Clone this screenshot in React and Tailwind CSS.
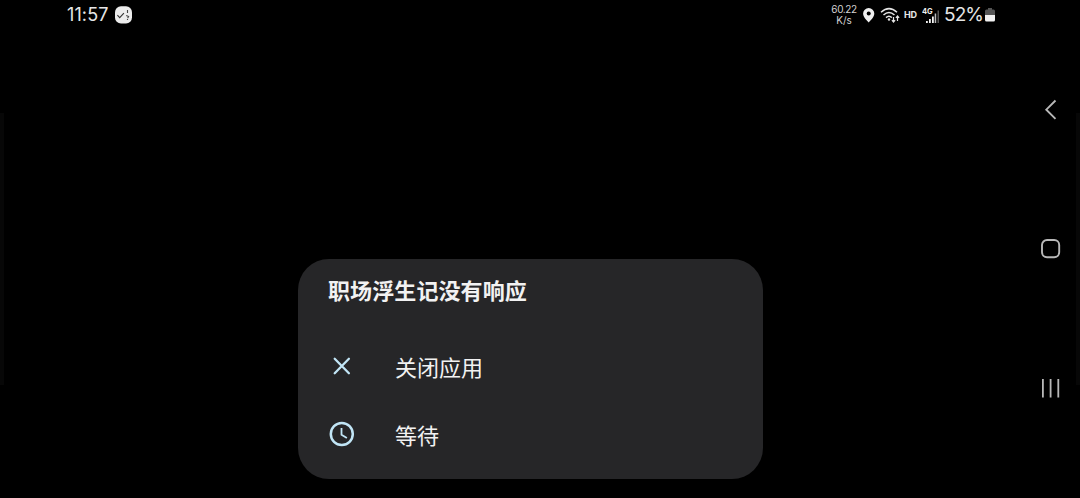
function Gesture() {
  return <div className="mt-[113px] h-[272px] w-1 shrink-0 bg-[#070707]" />;
}

function StatusBar() {
  return (
    <header className="flex h-[30px] items-center text-[#e6e6e6]">
      <span className="ml-[63px] w-12 text-[18px] leading-[30px] font-normal tracking-[0.1px] whitespace-nowrap">11:57</span>
      <svg className="h-[18px] w-[18px]" viewBox="0 0 18 18" fill="none">
        <rect x="0" y="0.2" width="17" height="17.2" rx="6" fill="#ececec" />
        <path d="M2.4 9.200l2.300 2.400 4.200-4.400" stroke="#333" strokeWidth="1.100" />
        <path d="M12.500 4v3M11.200 9.500l2.400 1-1 1.800M12.500 13v1" stroke="#444" strokeWidth="1.100" />
      </svg>
      <div className="mr-px ml-auto flex w-[26px] flex-col items-center text-[10px] leading-[11px] whitespace-nowrap text-[#d2d2d2]">
        <span className="tracking-[-0.4px]">60.22</span>
        <span>K/s</span>
      </div>
      <svg className="ml-[5px] h-[15px] w-3" viewBox="0 0 12 15">
        <path d="M5.700 0A5.600 5.600 0 0 0 0.100 5.600C.1 9.200 3.500 12.200 5.700 14.400c2.200-2.200 5.600-5.200 5.600-8.800A5.600 5.600 0 0 0 5.700 0z" fill="#f0f0f0" />
        <circle cx="5.700" cy="5.600" r="2" fill="#000" />
      </svg>
      <svg className="ml-[5px] h-4 w-5" viewBox="0 0 20 16" fill="none" stroke="#e4e4e4">
        <path d="M1 5.200Q9 -2 17 5.200M3.500 8Q9 3 14.500 8M6 10.600Q9 8 11.800 10.600" strokeWidth="1.500" />
        <circle cx="9" cy="12.500" r="1.200" fill="#e4e4e4" stroke="none" />
        <path d="M13.500 10v5M11.900 13.200l1.600 1.800 1.600-1.800M17.500 14V9M15.900 10.800L17.500 9l1.600 1.800" strokeWidth="1.200" />
      </svg>
      <span className="ml-[4px] w-[13px] text-[9px] leading-[30px] font-bold tracking-[-0.2px]">HD</span>
      <svg className="ml-[5px] h-[18px] w-[18px]" viewBox="0 0 18 18">
        <text x="0" y="7.500" fill="#eeeeee" fontSize="7.500" fontWeight="700">4G</text>
        <path d="M4 15h1.800v2H4zM7 13h1.800v4H7zM10 10.500h1.800V17H10z" fill="#f0f0f0" />
        <path d="M12.700 7.500h1.500V17h-1.500z" fill="#bbb" />
        <path d="M15.500 4.500h1.500V17h-1.500z" fill="#555" />
      </svg>
      <span className="ml-1 w-[41px] text-[19px] leading-[30px] tracking-[-0.9px]">52%</span>
      <svg className="mr-[35px] h-[14px] w-[10px]" viewBox="0 0 10 14">
        <path d="M3 0h4v1.500h1.500Q10 1.500 10 3v4H0V3q0-1.500 1.500-1.500H3z" fill="#555" />
        <path d="M0 7h10v5q0 1.500-1.500 1.500h-7Q0 13.500 0 12z" fill="#f2f2f2" />
      </svg>
    </header>
  );
}

function Dialog() {
  return (
    <section className="mt-[229px] ml-[294px] flex h-[219.5px] w-[465px] flex-col rounded-[31px] bg-[#262628] px-[30px] text-[#f2f2f2]">
      <h1 className="mt-4 text-[22px] leading-8 font-bold tracking-[0.1px]">职场浮生记没有响应</h1>
      <button className="mt-[45px] flex h-8 items-center text-left">
        <svg className="mb-1 h-7 w-7" viewBox="0 0 28 28" fill="none" stroke="#c1e5f6" strokeWidth="2.300" strokeLinecap="round">
          <path d="M6.700 6.800l14.200 14.400M20.900 6.800L6.700 21.200" />
        </svg>
        <span className="ml-[39px] text-[22px] leading-8">关闭应用</span>
      </button>
      <button className="mt-9 flex h-8 items-center text-left">
        <svg className="mb-1 h-7 w-7" viewBox="0 0 28 28" fill="none" stroke="#c1e5f6" strokeWidth="2.500">
          <circle cx="13.800" cy="14" r="11" />
          <path d="M13.500 8v6.700l5.400 3.200" strokeWidth="1.800" />
        </svg>
        <span className="ml-[39px] text-[22px] leading-8">等待</span>
      </button>
    </section>
  );
}

function NavigationBar() {
  return (
    <nav className="flex w-[46px] flex-col items-center pt-[98px] pr-[6px]">
      <button aria-label="Back">
        <svg className="h-6 w-6" viewBox="0 0 24 24" fill="none" stroke="#b8b8b8" strokeWidth="1.900">
          <path d="M17.500 2.500L8.300 11.700l9.200 9.200" />
        </svg>
      </button>
      <button className="mt-[115px]" aria-label="Home">
        <svg className="h-6 w-6" viewBox="0 0 24 24" fill="none" stroke="#b8b8b8" strokeWidth="1.900">
          <rect x="4" y="3" width="17.200" height="17.200" rx="5" />
        </svg>
      </button>
      <button className="mt-[115px]" aria-label="Recent apps">
        <svg className="h-6 w-6" viewBox="0 0 24 24" fill="none" stroke="#b8b8b8" strokeWidth="1.800">
          <path d="M4.900 3v18.500M12.600 3v18.500M20.300 3v18.500" />
        </svg>
      </button>
    </nav>
  );
}

export default function App() {
  return (
    <div className="flex h-[498px] w-[1080px] overflow-hidden bg-black font-['Inter','Noto_Sans_CJK_SC',sans-serif] antialiased">
      <Gesture />
      <main className="w-[1026px] shrink-0">
        <StatusBar />
        <Dialog />
      </main>
      <NavigationBar />
      <Gesture />
    </div>
  );
}
